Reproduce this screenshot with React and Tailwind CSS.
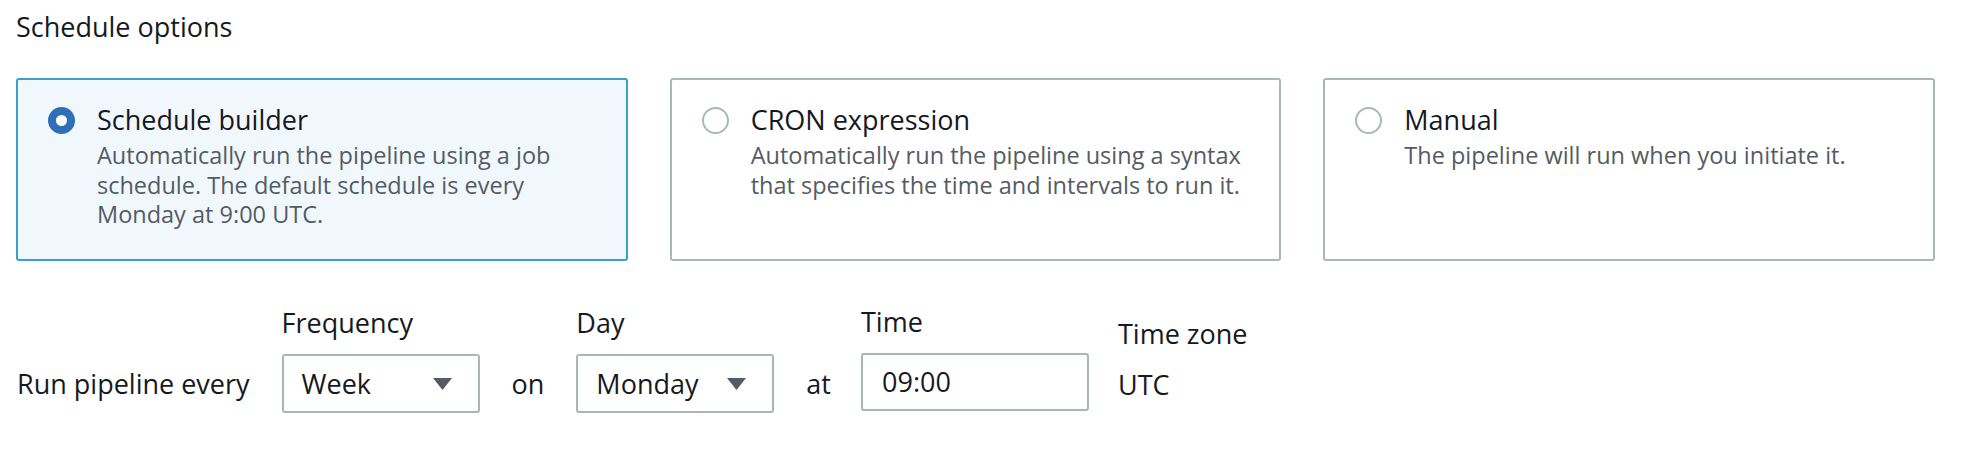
import React from "react";

const font = { fontFamily: '"Open Sans", "Liberation Sans", sans-serif' };

function Radio({ checked }) {
  if (checked) {
    return (
      <span className="flex h-[27px] w-[27px] items-center justify-center rounded-full bg-[#2f6fb7]">
        <span className="h-[11px] w-[11px] rounded-full bg-white" />
      </span>
    );
  }
  return <span className="block h-[27px] w-[27px] rounded-full border-2 border-[#aab7b8] bg-white" />;
}

function Tile({ checked, title, lines }) {
  return (
    <div
      className={
        "h-[183px] rounded-[3px] border-2 pl-[30px] pt-[23px] " +
        (checked ? "border-[#3a9fcc] bg-[#f1f8fd]" : "border-[#aab7b8] bg-white")
      }
    >
      <div className="flex items-start gap-[22px]">
        <div className="flex h-[34px] items-center">
          <Radio checked={checked} />
        </div>
        <div>
          <div className="whitespace-nowrap text-[27px] leading-[34px] text-[#16191f]">{title}</div>
          <div className="mt-[4px] whitespace-nowrap text-[23.5px] leading-[29.5px] text-[#545b64]">
            {lines.map((l, i) => (
              <div key={i}>{l}</div>
            ))}
          </div>
        </div>
      </div>
    </div>
  );
}

function Caret() {
  return (
    <svg width="21" height="14" viewBox="0 0 21 14">
      <path d="M1 1 H20 L10.5 13 Z" fill="#545b64" />
    </svg>
  );
}

function Select({ value }) {
  return (
    <div className="flex h-[59px] w-[198px] items-center justify-between rounded-[3px] border-2 border-[#aab7b8] bg-white pl-[18px] pr-[25px]">
      <span className="text-[27px] leading-[30px] text-[#16191f]">{value}</span>
      <Caret />
    </div>
  );
}

export default function App() {
  return (
    <div className="min-h-[472px] bg-white pl-[16px] pt-[9px] text-[#16191f]" style={font}>
      <div className="text-[27px] leading-[36px] text-[#16191f]">Schedule options</div>

      <div className="mt-[33px] grid w-[1919px] grid-cols-3 gap-[42px]">
        <Tile
          checked
          title="Schedule builder"
          lines={[
            "Automatically run the pipeline using a job",
            "schedule. The default schedule is every",
            "Monday at 9:00 UTC.",
          ]}
        />
        <Tile
          title="CRON expression"
          lines={[
            "Automatically run the pipeline using a syntax",
            "that specifies the time and intervals to run it.",
          ]}
        />
        <Tile title="Manual" lines={["The pipeline will run when you initiate it."]} />
      </div>

      <div className="mt-[43px] flex items-start gap-[32px] pl-[1px] text-[27px] leading-[30px]">
        <div className="mt-[50px] flex h-[59px] items-center whitespace-nowrap">Run pipeline every</div>

        <div className="mt-[4px]">
          <div className="h-[30px]">Frequency</div>
          <div className="mt-[16px]">
            <Select value="Week" />
          </div>
        </div>

        <div className="mt-[50px] flex h-[59px] items-center">on</div>

        <div className="mt-[4px]">
          <div className="h-[30px]">Day</div>
          <div className="mt-[16px]">
            <Select value="Monday" />
          </div>
        </div>

        <div className="mt-[50px] flex h-[59px] items-center">at</div>

        <div className="-ml-[2px] mt-[3px]">
          <div className="h-[30px]">Time</div>
          <div className="mt-[16px] flex h-[58px] w-[228px] items-center rounded-[3px] border-2 border-[#aab7b8] bg-white pl-[19px]">
            09:00
          </div>
        </div>

        <div className="-ml-[3px] mt-[15px]">
          <div className="h-[30px] whitespace-nowrap">Time zone</div>
          <div className="mt-[21px] h-[30px]">UTC</div>
        </div>
      </div>
    </div>
  );
}
